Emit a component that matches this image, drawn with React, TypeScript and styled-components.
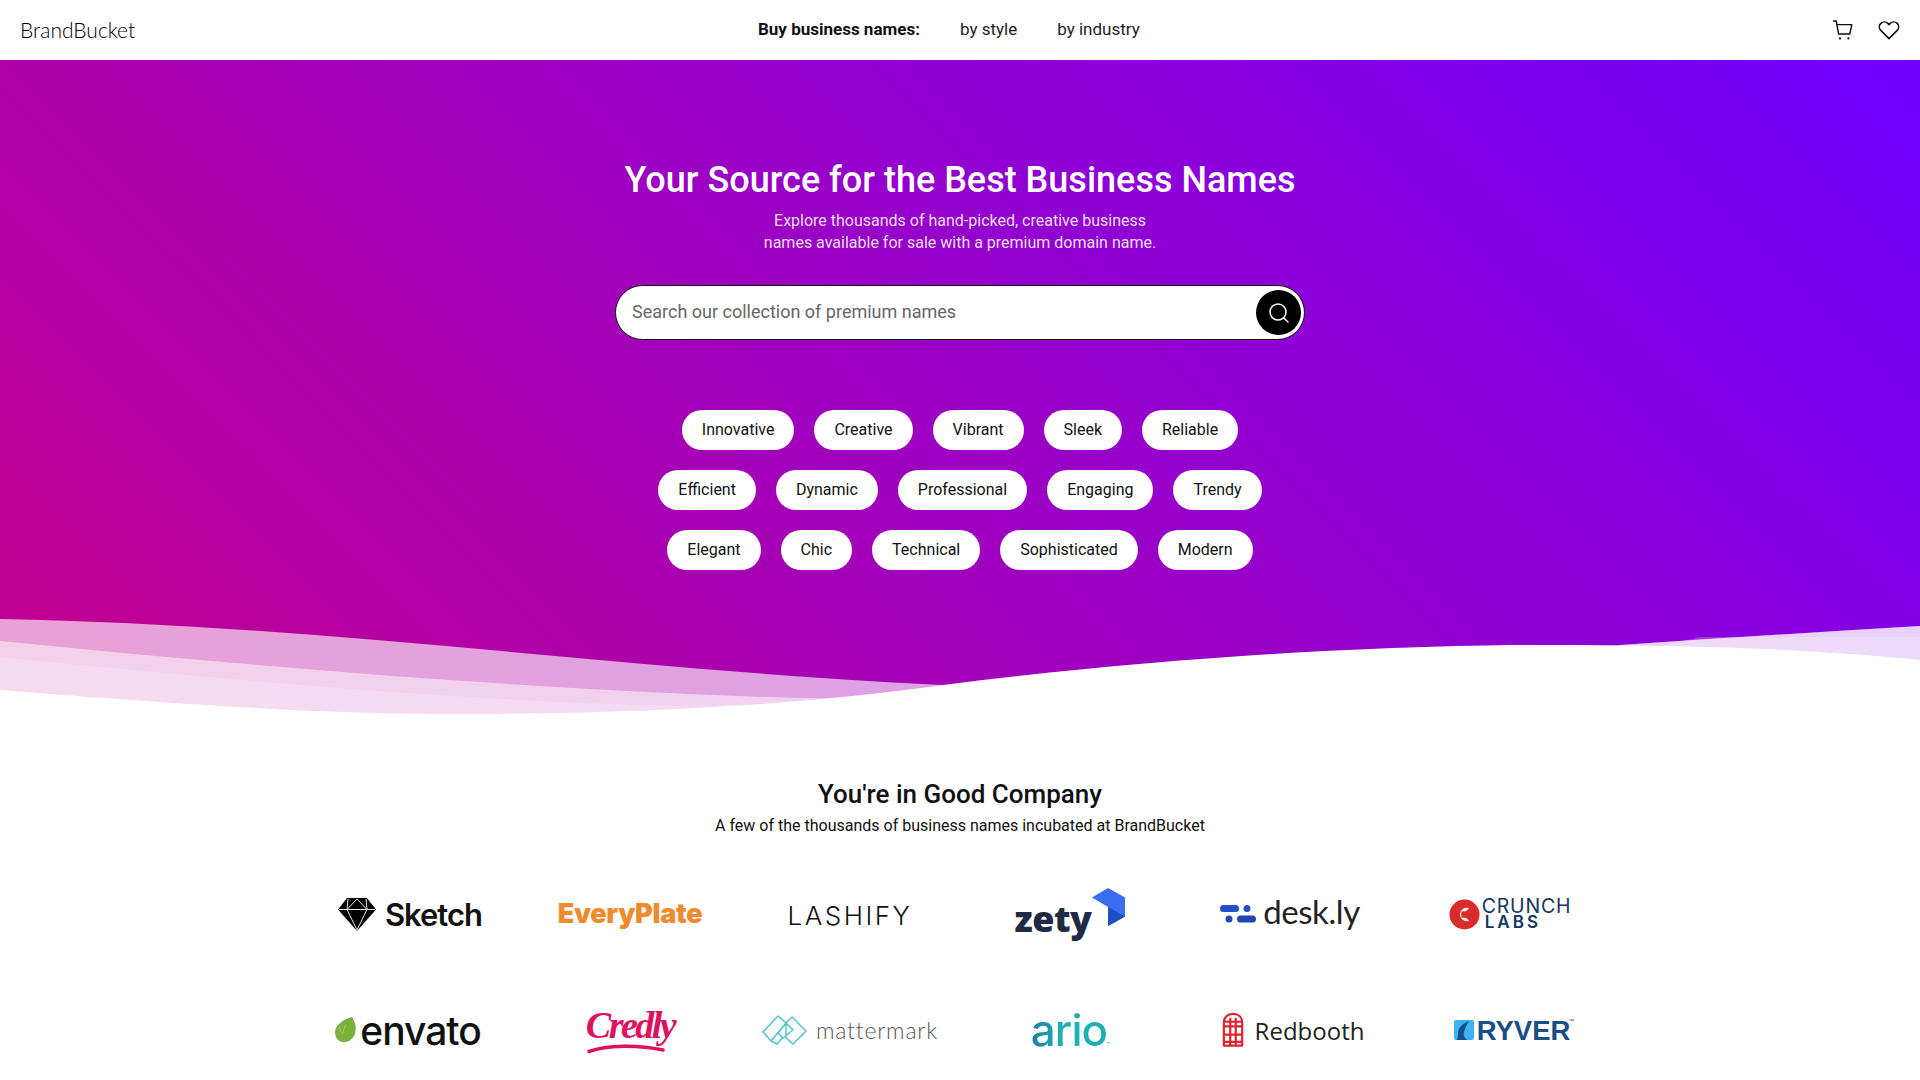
import React from 'react';
import styled, {createGlobalStyle} from 'styled-components';
import {Search} from 'lucide-react';

const TAG_ROWS = [
  ['Innovative', 'Creative', 'Vibrant', 'Sleek', 'Reliable'],
  ['Efficient', 'Dynamic', 'Professional', 'Engaging', 'Trendy'],
  ['Elegant', 'Chic', 'Technical', 'Sophisticated', 'Modern'],
];

const App: React.FC = () => {
  return (
    <>
      <GlobalStyle />
      <Header>
        <Brand>BrandBucket</Brand>
        <Menu>
          <MenuLabel>Buy business names:</MenuLabel>
          <MenuLink>by style</MenuLink>
          <MenuLink>by industry</MenuLink>
        </Menu>
        <HeaderIcons>
          <svg width="22" height="22" viewBox="0 0 22 22" fill="none" stroke="#111" strokeWidth="1.4">
            <path d="M1 2h3.200l2.400 13h11.200l2-9.400H5" strokeLinejoin="round" />
            <circle cx="8" cy="19.400" r="1.100" fill="#111" stroke="none" />
            <circle cx="16.400" cy="19.400" r="1.100" fill="#111" stroke="none" />
          </svg>
          <svg width="22" height="20" viewBox="0 0 22 20" fill="none" stroke="#111" strokeWidth="1.6">
            <path d="M11 18.600 2.800 10.400a5 5 0 0 1 0-7 5 5 0 0 1 7 0L11 4.600l1.200-1.200a5 5 0 0 1 7 0 5 5 0 0 1 0 7z" strokeLinejoin="round" />
          </svg>
        </HeaderIcons>
      </Header>

      <Hero>
        <HeroBody>
          <Title>Your Source for the Best Business Names</Title>
          <Lead>
            Explore thousands of hand-picked, creative business
            <br />
            names available for sale with a premium domain name.
          </Lead>
          <SearchBar>
            <SearchInput placeholder="Search our collection of premium names" />
            <SearchButton>
              <Search size={24} strokeWidth={1.5} color="#fff" />
            </SearchButton>
          </SearchBar>
          <Tags>
            {TAG_ROWS.map((row, i) => (
              <TagRow key={i}>
                {row.map(tag => (
                  <Tag key={tag}>{tag}</Tag>
                ))}
              </TagRow>
            ))}
          </Tags>
        </HeroBody>
        <Wave viewBox="0 615 1920 105" preserveAspectRatio="none">
          <path
            fill="#fff"
            fillOpacity=".63"
            d="M0 619C330 625 620 670 943 685L1000 700 1560 660 1621 645C1720 638 1820 632 1920 626V720H0Z"
          />
          <path
            fill="#fff"
            fillOpacity=".51"
            d="M0 641C270 668 540 690 796 698L1000 700 1560 660 1621 645C1720 638 1820 632 1920 626V720H0Z"
          />
          <path
            fill="#fff"
            fillOpacity=".22"
            d="M0 657C230 680 450 700 673 706L1000 700 1600 660 1700 637H1920V720H0Z"
          />
          <path
            fill="#fff"
            d="M0 690C200 706 330 714 460 714 640 714 800 705 943 685 1180 655 1400 645 1540 645 1680 645 1800 648 1920 660V720H0Z"
          />
        </Wave>
      </Hero>

      <Company>
        <CompanyTitle>You're in Good Company</CompanyTitle>
        <CompanyLead>A few of the thousands of business names incubated at BrandBucket</CompanyLead>
        <LogoGrid>
          <Logo>
            <svg width="38" height="34" viewBox="0 0 38 34">
              <path d="M9 1h20l9 11.500L19 34 0 12.500z" fill="#000" />
              <path d="M1 12.500h36M10 2l-1 10.500L19 33l10-20.500L28 2M9 12.500 19 2l10 10.500" fill="none" stroke="#fff" strokeWidth=".9" />
            </svg>
            <SketchName>Sketch</SketchName>
          </Logo>
          <Logo>
            <EveryPlateName>EveryPlate</EveryPlateName>
          </Logo>
          <Logo>
            <LashifyName>LASHIFY</LashifyName>
          </Logo>
          <Logo>
            <ZetyName>zety</ZetyName>
            <ZetyMark width="34" height="40" viewBox="0 0 36 40">
              <path d="M0 10 17 0l18 10v20L17 40V20z" fill="#3b6df0" />
              <path d="M17 20 35 30 17 40z" fill="#1d4fc4" />
            </ZetyMark>
          </Logo>
          <Logo>
            <svg width="36" height="20" viewBox="0 0 36 20">
              <rect x="0" y="1" width="19" height="7" rx="3.500" fill="#2350c8" />
              <circle cx="27" cy="4.500" r="3.500" fill="#2350c8" />
              <circle cx="9" cy="15" r="3.500" fill="#1f47b4" />
              <rect x="17" y="11.500" width="19" height="7" rx="3.500" fill="#1f47b4" />
            </svg>
            <DeskName>desk.ly</DeskName>
          </Logo>
          <Logo>
            <svg width="31" height="31" viewBox="0 0 32 32">
              <circle cx="16" cy="16" r="15.500" fill="#dc2b2b" />
              <path d="M21 9.500a7 7 0 1 0 0 13l-4-3.500h-4v-6h4z" fill="#fff" />
              <path d="M13 13h12v6H13z" fill="#dc2b2b" />
            </svg>
            <CrunchName>
              <CrunchTop>CRUNCH</CrunchTop>
              <CrunchBottom>LABS</CrunchBottom>
            </CrunchName>
          </Logo>
          <Logo $shift={-4}>
            <svg width="22" height="26" viewBox="0 0 22 26">
              <path d="M17 0C21 6 22 13 19 19 16 24 11 26 7 25 2 24 0 19 0 15 0 8 9 2 17 0z" fill="#7cb03c" />
              <path d="M4 9c1 4 2 6 4 8 0-3 1-6 3-9" fill="none" stroke="#a5cc74" strokeWidth="1" />
            </svg>
            <EnvatoName>envato</EnvatoName>
          </Logo>
          <Logo>
            <CredlyWrap>
              <CredlyName>Credly</CredlyName>
              <CredlySwoosh width="78" height="12" viewBox="0 0 78 12">
                <path d="M2 9.500C20 3 50 2.500 76 8" fill="none" stroke="#dd1160" strokeWidth="3.500" strokeLinecap="round" />
              </CredlySwoosh>
            </CredlyWrap>
          </Logo>
          <Logo>
            <svg width="45" height="30" viewBox="0 0 45 30" fill="none" stroke="#4cbfd2" strokeWidth="1.400">
              <path d="M1 17 16 1l8 7L9 26zM9 26l6 3 6-7M24 8l6-6 14 14-13 13-7-6zM16 18l8-10 7 7-10 8z" strokeLinejoin="round" />
            </svg>
            <MattermarkName>mattermark</MattermarkName>
          </Logo>
          <Logo>
            <ArioName>
              ario<TradeMark>™</TradeMark>
            </ArioName>
          </Logo>
          <Logo $shift={6}>
            <svg width="22" height="38" viewBox="0 0 24 38" fill="none" stroke="#dc2430" strokeWidth="2.400">
              <path d="M2 36V11C2 5 6 1.500 12 1.500S22 5 22 11v25zM2 15h20M2 24h20M2 32h20M9 6v30M15 6v30M2 10h20" strokeLinejoin="round" />
            </svg>
            <RedboothName>Redbooth</RedboothName>
          </Logo>
          <Logo $shift={4}>
            <svg width="20" height="20" viewBox="0 0 20 20">
              <rect width="20" height="20" rx="2" fill="#3db3f2" />
              <path d="M15 1C9 3 4 8 4 13c0 2 0 4-1 7h10c-3-3-4-5-3-8 1-4 3-8 5-11z" fill="#15508c" />
            </svg>
            <RyverName>
              RYVER<RyverMark>™</RyverMark>
            </RyverName>
          </Logo>
        </LogoGrid>
      </Company>
    </>
  );
};

const GlobalStyle = createGlobalStyle`
  html, body {
    margin: 0;
    padding: 0;
    background: #fff;
    color: #111;
    font-family: Roboto, "Liberation Sans", sans-serif;
  }
  * {
    box-sizing: border-box;
  }
`;

const Header = styled.header`
  display: flex;
  align-items: center;
  height: 60px;
  padding: 0 20px;
  background: #fff;
`;

const Brand = styled.div`
  flex: 0 0 738px;
  margin-top: -2px;
  font-family: Lato, sans-serif;
  font-size: 21px;
  font-weight: 300;
  color: #000;
`;

const Menu = styled.nav`
  display: flex;
  flex: 1;
  gap: 40px;
  margin-top: -2px;
  font-size: 17px;
`;

const MenuLabel = styled.span`
  font-weight: 700;
`;

const MenuLink = styled.span`
  color: #222;
`;

const HeaderIcons = styled.div`
  display: flex;
  align-items: center;
  gap: 24px;
`;

const Hero = styled.section`
  display: flex;
  flex-direction: column;
  height: 660px;
  background: linear-gradient(45deg, #c4008c 0%, #7000ff 100%);
`;

const HeroBody = styled.div`
  display: flex;
  flex: 1;
  flex-direction: column;
  align-items: center;
  padding-top: 98px;
  color: #fff;
`;

const Title = styled.h1`
  margin: 0;
  font-size: 36px;
  font-weight: 500;
  line-height: 44px;
`;

const Lead = styled.p`
  margin: 8px 0 0;
  font-size: 16px;
  line-height: 22px;
  text-align: center;
  color: rgba(255, 255, 255, 0.88);
`;

const SearchBar = styled.div`
  display: flex;
  align-items: center;
  width: 690px;
  height: 55px;
  margin-top: 31px;
  padding: 0 3px 0 16px;
  background: #fff;
  border: 1px solid #111;
  border-radius: 28px;
`;

const SearchInput = styled.input`
  flex: 1;
  margin-top: -2px;
  border: 0;
  outline: 0;
  padding: 1px 0;
  background: transparent;
  font-family: Roboto, sans-serif;
  font-size: 18px;
  color: #111;
  &::placeholder {
    color: #666;
    opacity: 1;
  }
`;

const SearchButton = styled.button`
  display: flex;
  align-items: center;
  justify-content: center;
  width: 45px;
  height: 45px;
  padding: 0;
  border: 0;
  border-radius: 50%;
  background: #000;
`;

const Tags = styled.div`
  display: flex;
  flex-direction: column;
  gap: 20px;
  margin-top: 70px;
`;

const TagRow = styled.div`
  display: flex;
  justify-content: center;
  gap: 20px;
`;

const Tag = styled.span`
  display: flex;
  align-items: center;
  height: 40px;
  padding: 0 20px 2px;
  border-radius: 20px;
  background: #fff;
  color: #111;
  font-size: 16px;
`;

const Wave = styled.svg`
  display: block;
  flex: none;
  width: 100%;
  height: 105px;
`;

const Company = styled.section`
  display: flex;
  flex-direction: column;
  align-items: center;
  padding-top: 59px;
`;

const CompanyTitle = styled.h2`
  margin: 0;
  font-size: 26px;
  font-weight: 500;
  line-height: 30px;
  color: #111;
`;

const CompanyLead = styled.p`
  margin: 5px 0 0;
  font-size: 16px;
  line-height: 24px;
`;

const LogoGrid = styled.div`
  display: grid;
  grid-template-columns: repeat(6, 220px);
  grid-auto-rows: 116px;
  margin-top: 18px;
`;

const Logo = styled.div<{$shift?: number}>`
  display: flex;
  align-items: center;
  justify-content: center;
  gap: 9px;
  margin-left: ${p => p.$shift || 0}px;
`;

const SketchName = styled.span`
  font-family: Inter, sans-serif;
  font-size: 31px;
  font-weight: 600;
  letter-spacing: -1px;
  color: #111;
`;

const EveryPlateName = styled.span`
  margin-top: -2px;
  font-family: Inter, sans-serif;
  font-size: 27px;
  font-weight: 900;
  letter-spacing: -0.3px;
  color: #f18a2d;
`;

const LashifyName = styled.span`
  margin-top: 2px;
  font-family: Inter, sans-serif;
  font-size: 26px;
  font-weight: 300;
  letter-spacing: 2.500px;
  color: #111;
`;

const ZetyName = styled.span`
  margin-top: 8px;
  font-family: "Open Sans", sans-serif;
  font-size: 36px;
  font-weight: 800;
  letter-spacing: -0.5px;
  color: #1f2a44;
`;

const ZetyMark = styled.svg`
  margin: -14px 0 0 -9px;
`;

const DeskName = styled.span`
  margin: -7px 0 0 -2px;
  font-family: Lato, sans-serif;
  font-size: 33px;
  font-weight: 400;
  letter-spacing: -0.4px;
  color: #222;
`;

const CrunchName = styled.span`
  display: flex;
  flex-direction: column;
  margin-left: -7px;
  font-family: Inter, sans-serif;
  line-height: 16px;
  color: #123561;
`;

const CrunchTop = styled.span`
  font-size: 19.500px;
  font-weight: 400;
  letter-spacing: 0.8px;
`;

const CrunchBottom = styled.span`
  margin-left: 3px;
  font-size: 17px;
  font-weight: 600;
  letter-spacing: 3px;
`;

const EnvatoName = styled.span`
  margin-left: -6px;
  font-family: Inter, sans-serif;
  font-size: 39px;
  font-weight: 500;
  letter-spacing: -1px;
  color: #111;
`;

const CredlyWrap = styled.div`
  position: relative;
  height: 50px;
`;

const CredlyName = styled.span`
  font-family: "Liberation Serif", serif;
  font-size: 38px;
  font-style: italic;
  font-weight: 700;
  line-height: 40px;
  letter-spacing: -2.500px;
  color: #dd1160;
`;

const CredlySwoosh = styled.svg`
  position: absolute;
  left: 1px;
  bottom: 1px;
`;

const MattermarkName = styled.span`
  font-family: Lato, sans-serif;
  font-size: 23px;
  font-weight: 300;
  letter-spacing: 0.8px;
  color: #555;
`;

const ArioName = styled.span`
  font-family: Inter, sans-serif;
  font-size: 44px;
  font-weight: 500;
  letter-spacing: -1px;
  background: linear-gradient(90deg, #1a7fa3 0%, #1fb0b4 40%);
  -webkit-background-clip: text;
  background-clip: text;
  color: transparent;
`;

const TradeMark = styled.sup`
  font-size: 5px;
  font-weight: 400;
  vertical-align: baseline;
  color: #1fa7ad;
`;

const RedboothName = styled.span`
  margin-left: 2px;
  font-family: "Open Sans", sans-serif;
  font-size: 24px;
  font-weight: 500;
  color: #222;
`;

const RyverName = styled.span`
  position: relative;
  margin-left: -6px;
  margin-top: 1px;
  font-family: "Liberation Sans", sans-serif;
  font-size: 27.500px;
  font-weight: 700;
  color: #174f86;
`;

const RyverMark = styled.sup`
  position: absolute;
  top: 2px;
  right: -4px;
  font-size: 6px;
  font-weight: 400;
  line-height: 8px;
`;

export default App;
